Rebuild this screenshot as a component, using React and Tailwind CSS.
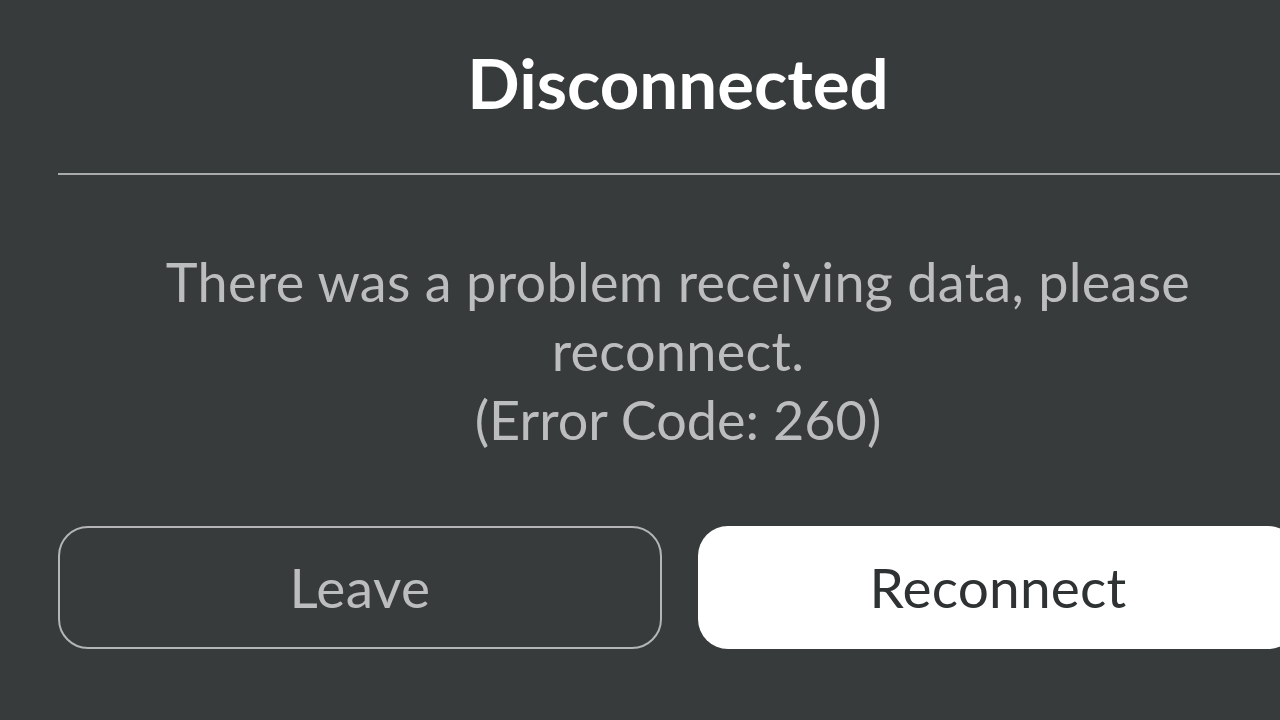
import React from 'react';

const App = () => {
  return (
    <div
      className="w-[1280px] h-[720px] overflow-hidden bg-[#383b3c]"
      style={{ fontFamily: 'Lato, "Open Sans", sans-serif' }}
    >
      <div className="ml-[58px] w-[1240px] flex flex-col">
        {/* Title */}
        <h1 className="h-[173px] flex items-center justify-center pb-[8px] text-[69px] font-bold text-white">
          Disconnected
        </h1>
        <div className="h-[2px] bg-[#a9abac]" />

        {/* Message */}
        <div className="pt-[72px] flex flex-col items-center text-center text-[54px] leading-[69px] tracking-[0.3px] text-[#bcbdbe]">
          <p className="w-[1100px]">There was a problem receiving data, please reconnect.</p>
          <p className="tracking-[0px]">(Error Code: 260)</p>
        </div>

        {/* Buttons */}
        <div className="mt-[72px] flex gap-[36px]">
          <button className="flex-1 h-[123px] rounded-[30px] border-2 border-[#b3b5b6] text-[55px] tracking-[0.5px] text-[#bcbdbe] flex items-center justify-center">
            Leave
          </button>
          <button className="flex-1 h-[123px] rounded-[30px] bg-white text-[55px] tracking-[0.2px] text-[#2f3233] flex items-center justify-center">
            Reconnect
          </button>
        </div>
      </div>
    </div>
  );
};

export default App;
